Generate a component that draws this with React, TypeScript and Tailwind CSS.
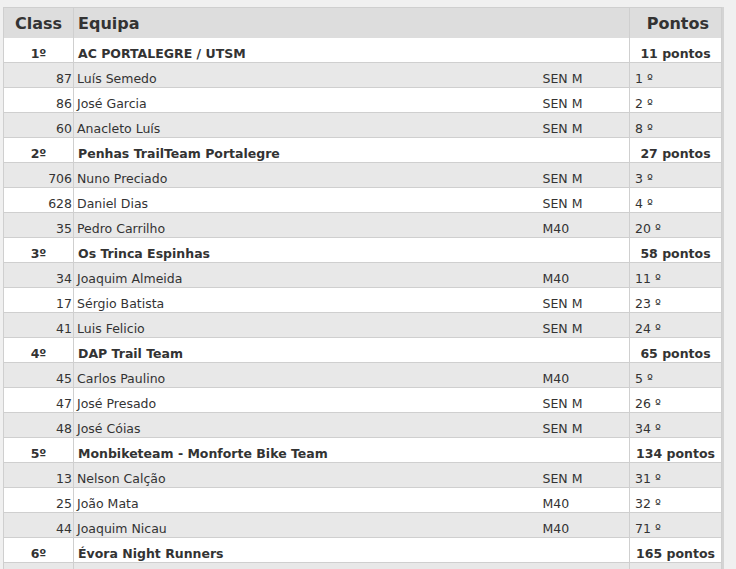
import React from 'react';

type Player = { num: string; name: string; cat: string; pos: string };
type Team = { rank: string; name: string; points: string; players: Player[] };

const teams: Team[] = [
  {
    rank: '1º',
    name: 'AC PORTALEGRE / UTSM',
    points: '11 pontos',
    players: [
      { num: '87', name: 'Luís Semedo', cat: 'SEN M', pos: '1 º' },
      { num: '86', name: 'José Garcia', cat: 'SEN M', pos: '2 º' },
      { num: '60', name: 'Anacleto Luís', cat: 'SEN M', pos: '8 º' },
    ],
  },
  {
    rank: '2º',
    name: 'Penhas TrailTeam Portalegre',
    points: '27 pontos',
    players: [
      { num: '706', name: 'Nuno Preciado', cat: 'SEN M', pos: '3 º' },
      { num: '628', name: 'Daniel Dias', cat: 'SEN M', pos: '4 º' },
      { num: '35', name: 'Pedro Carrilho', cat: 'M40', pos: '20 º' },
    ],
  },
  {
    rank: '3º',
    name: 'Os Trinca Espinhas',
    points: '58 pontos',
    players: [
      { num: '34', name: 'Joaquim Almeida', cat: 'M40', pos: '11 º' },
      { num: '17', name: 'Sérgio Batista', cat: 'SEN M', pos: '23 º' },
      { num: '41', name: 'Luis Felicio', cat: 'SEN M', pos: '24 º' },
    ],
  },
  {
    rank: '4º',
    name: 'DAP Trail Team',
    points: '65 pontos',
    players: [
      { num: '45', name: 'Carlos Paulino', cat: 'M40', pos: '5 º' },
      { num: '47', name: 'José Presado', cat: 'SEN M', pos: '26 º' },
      { num: '48', name: 'José Cóias', cat: 'SEN M', pos: '34 º' },
    ],
  },
  {
    rank: '5º',
    name: 'Monbiketeam - Monforte Bike Team',
    points: '134 pontos',
    players: [
      { num: '13', name: 'Nelson Calção', cat: 'SEN M', pos: '31 º' },
      { num: '25', name: 'João Mata', cat: 'M40', pos: '32 º' },
      { num: '44', name: 'Joaquim Nicau', cat: 'M40', pos: '71 º' },
    ],
  },
  {
    rank: '6º',
    name: 'Évora Night Runners',
    points: '165 pontos',
    players: [{ num: '', name: '', cat: '', pos: '' }],
  },
];

export default function App() {
  return (
    <div className="min-h-[569px] w-[736px] overflow-hidden bg-[#f0f0f0] pl-[3px] pt-[7px] font-['DejaVu_Sans',Verdana,sans-serif] text-[#333]">
      <div className="w-[718px] shadow-[1px_0_0_#f5f5f5,3px_0_0_#d4d4d4]">
        <table className="w-[718px] table-fixed border-collapse border border-[#cfcfcf]">
          <colgroup>
            <col className="w-[70px]" />
            <col className="w-[469px]" />
            <col className="w-[87px]" />
            <col className="w-[92px]" />
          </colgroup>
          <thead>
            <tr className="h-[30px] bg-[#dddddd] text-[16px] font-bold">
              <th className="border-r border-[#cfcfcf] pt-[3px] text-center">Class</th>
              <th colSpan={2} className="border-r border-[#cfcfcf] pl-[4px] pt-[3px] text-left">Equipa</th>
              <th className="pr-[12px] pt-[3px] text-right">Pontos</th>
            </tr>
          </thead>
          <tbody className="text-[12.5px] leading-[15px]">
            {teams.map((t) => (
              <React.Fragment key={t.rank}>
                <tr className="h-[25px] border-b border-[#cfcfcf] bg-white font-bold">
                  <td className="border-r border-[#cfcfcf] pb-[1px] text-center align-bottom">{t.rank}</td>
                  <td colSpan={2} className="border-r border-[#cfcfcf] pb-[1px] pl-[4px] align-bottom">{t.name}</td>
                  <td className="pb-[1px] text-center align-bottom">{t.points}</td>
                </tr>
                {t.players.map((p, i) => (
                  <tr
                    key={p.num + i}
                    className={`h-[25px] border-b border-[#cfcfcf] ${i % 2 === 0 ? 'bg-[#e8e8e8]' : 'bg-white'}`}
                  >
                    <td className="border-r border-[#cfcfcf] pb-[1px] pr-[1px] text-right align-bottom">{p.num}</td>
                    <td className="pb-[1px] pl-[3px] align-bottom">{p.name}</td>
                    <td className="border-r border-[#cfcfcf] pb-[1px] align-bottom">{p.cat}</td>
                    <td className="pb-[1px] pl-[5px] align-bottom">{p.pos}</td>
                  </tr>
                ))}
              </React.Fragment>
            ))}
          </tbody>
        </table>
      </div>
    </div>
  );
}
